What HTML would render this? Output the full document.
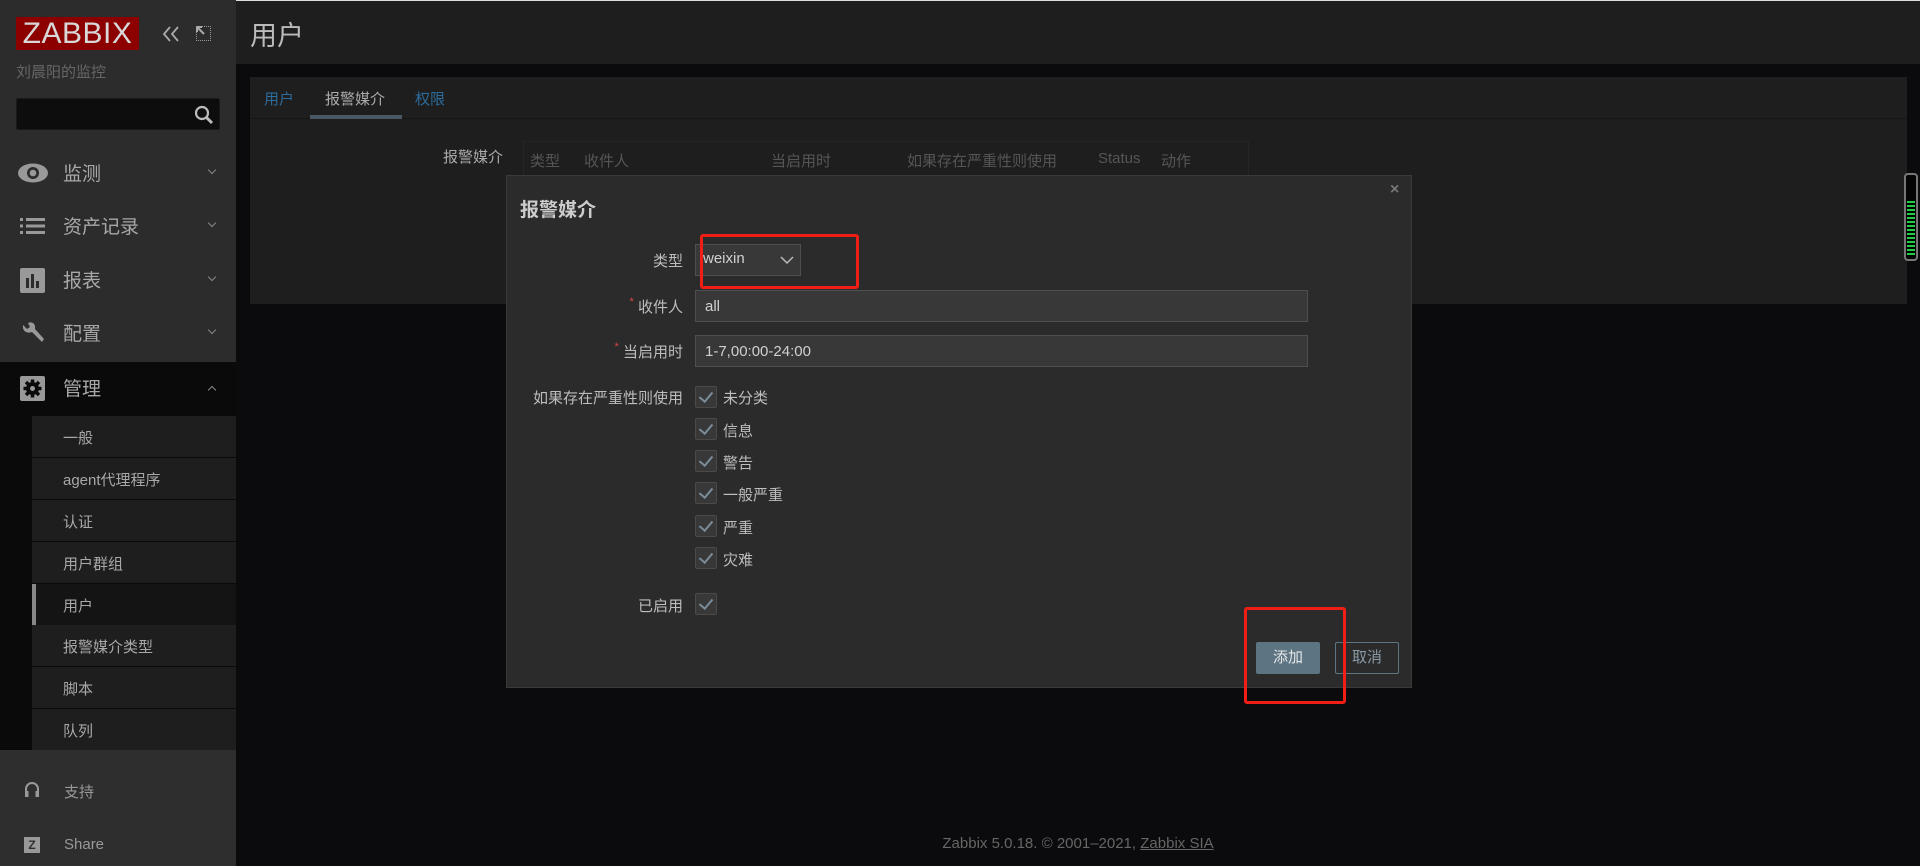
<!DOCTYPE html>
<html><head><meta charset="utf-8"><style>
*{margin:0;padding:0;box-sizing:border-box}
body{width:1920px;height:866px;overflow:hidden;background:#0b0b0d;font-family:"Liberation Sans","Noto Sans CJK SC",sans-serif;color:#bdbdbd;position:relative}
.a{position:absolute}
#side{left:0;top:0;width:236px;height:866px;background:#2c2c2c}
.mi{position:absolute;left:0;width:236px;height:53px;font-size:19px;color:#a8a8a8}
.mi .t{position:absolute;left:63px;top:12px}
.mi .c{position:absolute;left:209px;top:20px;width:6px;height:6px;border:solid #888;border-width:0 1.5px 1.5px 0;transform:rotate(45deg)}
.mi .c.up{transform:rotate(-135deg);top:25px}
.sub{position:absolute;left:32px;width:204px;height:41px;background:#1e1e1e;font-size:15px;color:#a8a8a8;padding:11px 0 0 31px}
.lab{position:absolute;right:1237px;font-size:15px;color:#bdbdbd;text-align:right;white-space:nowrap}
.req{color:#d44;font-size:11px;vertical-align:top}
.cb{position:absolute;left:695px;width:22px;height:22px;background:#383838;border:1px solid #4a4a4a;border-radius:2px}
.cb:after{content:"";position:absolute;left:6px;top:2px;width:6px;height:11px;border:solid #7a8c99;border-width:0 2px 2px 0;transform:rotate(40deg)}
.cl{position:absolute;left:723px;font-size:15px;color:#bdbdbd}
.inp{position:absolute;left:695px;width:613px;height:32px;background:#383838;border:1px solid #4f4f4f;font-size:15px;color:#d0d0d0;padding:7px 9px}
</style></head><body>
<div class="a" style="left:0;top:0;width:1920px;height:1px;background:#ddd"></div>
<div id="side" class="a">
 <div class="a" style="left:16px;top:17px;width:123px;height:33px;background:#8c0000;color:#d8d8d8;font-size:30px;line-height:33px;text-align:center;letter-spacing:0.5px">ZABBIX</div>
 <svg class="a" style="left:161px;top:25px" width="22" height="18"><path d="M9 2 L3 9 L9 16 M17 2 L11 9 L17 16" fill="none" stroke="#aaa" stroke-width="1.8"/></svg>
 <div class="a" style="left:196px;top:26px;width:15px;height:15px;border:1px dotted #999"></div>
 <svg class="a" style="left:196px;top:26px" width="10" height="10"><path d="M1 1 L8 8 M1 1 H6 M1 1 V6" stroke="#aaa" stroke-width="2"/></svg>
 <div class="a" style="left:16px;top:61px;font-size:15px;color:#666">刘晨阳的监控</div>
 <div class="a" style="left:16px;top:98px;width:204px;height:32px;background:#0d0d0d;border:1px solid #1a1a1a;border-radius:2px"></div>
 <svg class="a" style="left:193px;top:104px" width="22" height="22"><circle cx="9" cy="9" r="6" fill="none" stroke="#bbb" stroke-width="2.2"/><path d="M13 13 L19 19" stroke="#bbb" stroke-width="3"/></svg>
 <div class="mi" style="top:147px"><svg class="a" style="left:17px;top:15px" width="32" height="22"><ellipse cx="16" cy="11" rx="15" ry="9.5" fill="#999"/><circle cx="16" cy="11" r="6" fill="#2c2c2c"/><circle cx="16" cy="11" r="3.3" fill="#999"/></svg><span class="t">监测</span><span class="c"></span></div>
 <div class="mi" style="top:200px"><svg class="a" style="left:20px;top:17px" width="26" height="18"><g fill="#999"><rect x="0" y="1" width="3" height="3"/><rect x="6" y="1" width="19" height="3"/><rect x="0" y="7.5" width="3" height="3"/><rect x="6" y="7.5" width="19" height="3"/><rect x="0" y="14" width="3" height="3"/><rect x="6" y="14" width="19" height="3"/></g></svg><span class="t">资产记录</span><span class="c"></span></div>
 <div class="mi" style="top:254px"><svg class="a" style="left:20px;top:14px" width="25" height="25"><rect width="25" height="25" rx="2" fill="#999"/><g fill="#2c2c2c"><rect x="6" y="10" width="3" height="10"/><rect x="11" y="6" width="3" height="14"/><rect x="16" y="13" width="3" height="7"/></g></svg><span class="t">报表</span><span class="c"></span></div>
 <div class="mi" style="top:307px"><svg class="a" style="left:20px;top:14px" width="26" height="26"><path d="M3 4 L7 8 L10 6 L8 2 C12 0 16 3 15 8 L24 18 L22 21 L12 11 C7 13 2 10 3 4Z" fill="#999"/></svg><span class="t">配置</span><span class="c"></span></div>
 <div class="mi" style="top:362px;height:53px;background:#0a0a0a;color:#a8a8a8"><svg class="a" style="left:20px;top:14px" width="25" height="25"><rect width="25" height="25" rx="2" fill="#999"/><circle cx="12.5" cy="12.5" r="6.5" fill="#0a0a0a"/><g stroke="#0a0a0a" stroke-width="3.5"><path d="M12.5 3.5V21.5M3.5 12.5H21.5M6 6L19 19M19 6L6 19"/></g><circle cx="12.5" cy="12.5" r="2.5" fill="#999"/></svg><span class="t">管理</span><span class="c up"></span></div>
 <div class="a" style="left:0;top:415px;width:236px;height:335px;background:#0a0a0a"></div>
 <div class="sub" style="top:416px">一般</div>
 <div class="sub" style="top:458px">agent代理程序</div>
 <div class="sub" style="top:500px">认证</div>
 <div class="sub" style="top:542px">用户群组</div>
 <div class="sub" style="top:584px;background:#141414;border-left:4px solid #888;padding-left:27px">用户</div>
 <div class="sub" style="top:625px">报警媒介类型</div>
 <div class="sub" style="top:667px">脚本</div>
 <div class="sub" style="top:709px">队列</div>
 <div class="a" style="left:0;top:750px;width:236px;height:116px;background:#2e2e2e"></div>
 <svg class="a" style="left:24px;top:781px" width="16" height="18"><path d="M2 11 V8 A6 6 0 0 1 14 8 V11" fill="none" stroke="#999" stroke-width="2"/><rect x="1" y="10" width="3.5" height="6" fill="#999"/><rect x="11.5" y="10" width="3.5" height="6" fill="#999"/></svg>
 <div class="a" style="left:64px;top:781px;font-size:15px;color:#999">支持</div>
 <div class="a" style="left:24px;top:837px;width:16px;height:16px;background:#999;color:#2e2e2e;font-size:12px;font-weight:bold;text-align:center;line-height:16px">Z</div>
 <div class="a" style="left:64px;top:836px;font-size:15px;color:#999">Share</div>
</div>
<div class="a" style="left:236px;top:1px;width:1684px;height:63px;background:#1e1e1e"></div>
<div class="a" style="left:250px;top:14px;font-size:27px;color:#bbb">用户</div>
<div class="a" style="left:250px;top:77px;width:1657px;height:227px;background:#1e1e1e"></div>
<div class="a" style="left:250px;top:118px;width:1657px;height:1px;background:#161616"></div>
<div class="a" style="left:264px;top:88px;font-size:15px;color:#2c6c9c">用户</div>
<div class="a" style="left:325px;top:88px;font-size:15px;color:#aaa">报警媒介</div>
<div class="a" style="left:310px;top:115px;width:92px;height:4px;background:#4a5866"></div>
<div class="a" style="left:415px;top:88px;font-size:15px;color:#2c6c9c">权限</div>
<div class="a" style="left:443px;top:146px;font-size:15px;color:#aaa">报警媒介</div>
<div class="a" style="left:523px;top:141px;width:726px;height:37px;border:1px solid #252525"></div>
<div class="a" style="left:530px;top:150px;font-size:15px;color:#555">类型</div>
<div class="a" style="left:584px;top:150px;font-size:15px;color:#555">收件人</div>
<div class="a" style="left:771px;top:150px;font-size:15px;color:#555">当启用时</div>
<div class="a" style="left:907px;top:150px;font-size:15px;color:#555">如果存在严重性则使用</div>
<div class="a" style="left:1098px;top:150px;font-size:15px;color:#555">Status</div>
<div class="a" style="left:1161px;top:150px;font-size:15px;color:#555">动作</div>
<div class="a" style="left:1904px;top:173px;width:14px;height:88px;border:2px solid #777;border-radius:4px;background:#050505"></div>
<div class="a" style="left:1907px;top:201px;width:8px;height:56px;background:repeating-linear-gradient(#2c4 0 2px,transparent 2px 4px)"></div>
<div class="a" style="left:0;top:835px;width:100%;text-align:center;padding-left:236px;font-size:15px;color:#666">Zabbix 5.0.18. © 2001–2021, <span style="text-decoration:underline">Zabbix SIA</span></div>
<div class="a" style="left:506px;top:175px;width:906px;height:513px;background:#2b2b2b;border:1px solid #3a3a3a"></div>
<div class="a" style="left:520px;top:195px;font-size:19px;font-weight:bold;color:#ccc">报警媒介</div>
<div class="a" style="left:1390px;top:181px;font-size:16px;color:#777;font-weight:bold">×</div>
<div class="lab" style="top:250px">类型</div>
<div class="a" style="left:695px;top:244px;width:106px;height:32px;background:#383838;border:1px solid #4f4f4f"></div>
<div class="a" style="left:703px;top:250px;font-size:15px;color:#d0d0d0">weixin</div>
<svg class="a" style="left:780px;top:255px" width="14" height="10"><path d="M1 2 L7 8 L13 2" fill="none" stroke="#bbb" stroke-width="1.5"/></svg>
<div class="lab" style="top:296px"><span class="req">*</span> 收件人</div>
<div class="inp" style="top:290px">all</div>
<div class="lab" style="top:341px"><span class="req">*</span> 当启用时</div>
<div class="inp" style="top:335px">1-7,00:00-24:00</div>
<div class="lab" style="top:387px">如果存在严重性则使用</div>
<div class="cb" style="top:386px"></div><div class="cl" style="top:387px">未分类</div>
<div class="cb" style="top:418px"></div><div class="cl" style="top:420px">信息</div>
<div class="cb" style="top:450px"></div><div class="cl" style="top:452px">警告</div>
<div class="cb" style="top:482px"></div><div class="cl" style="top:484px">一般严重</div>
<div class="cb" style="top:515px"></div><div class="cl" style="top:517px">严重</div>
<div class="cb" style="top:547px"></div><div class="cl" style="top:549px">灾难</div>
<div class="lab" style="top:595px">已启用</div>
<div class="cb" style="top:593px"></div>
<div class="a" style="left:1256px;top:642px;width:64px;height:32px;background:#5d7583;color:#e6e6e6;font-size:15px;text-align:center;line-height:32px;border-radius:2px">添加</div>
<div class="a" style="left:1335px;top:642px;width:64px;height:32px;border:1px solid #5d7583;color:#8a9aa4;font-size:15px;text-align:center;line-height:30px;border-radius:2px">取消</div>
<div class="a" style="left:700px;top:234px;width:159px;height:55px;border:3px solid #f01e14;border-radius:3px"></div>
<div class="a" style="left:1244px;top:607px;width:102px;height:97px;border:3px solid #f01e14;border-radius:3px"></div>
</body></html>
